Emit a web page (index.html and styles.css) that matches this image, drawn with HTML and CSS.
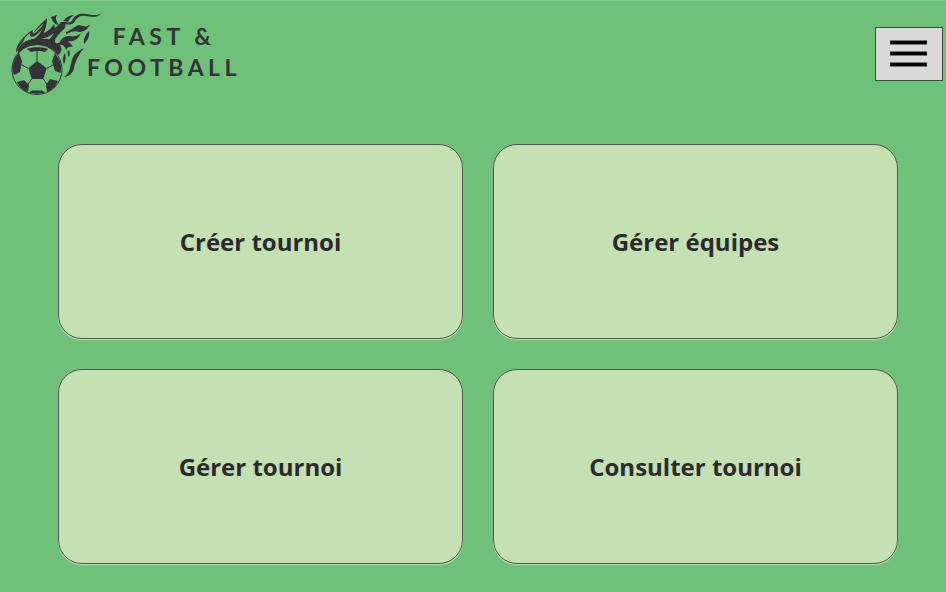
FILE: index.html
```html
<!DOCTYPE html>
<html lang="fr">
<head>
<meta charset="utf-8">
<title>Fast &amp; Football</title>
<link rel="stylesheet" href="styles.css">
</head>
<body>
<header class="topbar">
  <div class="logo">
    <svg class="logo-mark" width="88" height="90" viewBox="0 8 88 90" aria-hidden="true">
      <g fill="#333338">
        <path d="M102 13C98 18 91 17 86 16C81 15 77 17 75 21C73 25 69 25 65 24C67 27 63 30 60 33C57 36 55 40 52 43C50 46 47 45 46 42C49 41 52 36 54 33C51 35 47 38 44 38C40 39 37 42 33 40C37 37 41 33 43 27C45 24 45 21 46 20C46 26 41 31 36 35C32 38 29 37 30 33C27 35 24 38 23 42C21 44 18 47 17 52C15 51 17 46 19 43C21 41 23 37 26 35C28 33 30 31 33 30C32 33 33 34 35 33C39 30 42 26 44 23C39 27 36 31 33 33C36 28 42 23 47 18C47 27 44 31 44 33C50 30 52 27 54 24L55 28C58 26 60 23 61 22L65 22C69 23 72 22 73 19C75 15 80 13 86 14C91 15 98 16 102 13Z"/>
        <path d="M51 17C53 16 55 16 57 15C55 18 56 21 59 25C55 25 52 21 51 17Z"/>
        <path d="M63 21C66 17 70 15 74 15C71 17 69 19 68 22Z"/>
        <path d="M20 46C24 41 32 38 38 39C46 38 51 41 56 38C53 43 57 45 60 42C62 37 66 36 70 36C74 37 78 36 81 33C78 40 73 42 68 41C70 43 72 45 73 47C70 46 67 47 66 50C65 46 62 44 60 45C63 49 61 53 58 55C55 50 47 45 38 45C30 45 23 48 18 54C17 51 18 48 20 46Z"/>
        <path d="M66 32C71 30 75 26 79 25C84 26 87 28 90 24C88 30 83 32 79 32C74 30 70 33 66 34Z"/>
        <path d="M89 31C90 35 88 40 84 44C83 39 86 34 89 31Z"/>
        <path d="M84 48C80 50 76 52 73 57C71 61 71 65 70 68C69 72 67 75 64 77C69 77 73 73 74 68C75 62 79 54 84 48Z"/>
        <path d="M65 53C63 56 62 60 64 64C66 60 66 56 65 53Z"/>
        <path d="M69 50C67 52 67 54 69 57C70 54 70 52 69 50Z"/>
        <path d="M48 49C43 46.500 32 46.500 27 49L31 52C35 50.500 41 50.500 45 52Z"/>
        <path d="M37 61L46.700 68.300L43.300 79L31.700 79L28.300 68.300Z"/>
        <path d="M19 53C15 57 13 62 12.500 67C12.500 70 13 73 14 75L20 72L22 61Z"/>
        <path d="M55 53L60 61C61 65 61.500 69 60.500 73L55 71L52 61Z"/>
        <path d="M17 82C19 86 22 90 28 92L29 85L24 80Z"/>
        <path d="M46 85L47 92C52 90 56 86 58 81L50 79Z"/>
        <path d="M29 92.500C33 94 41 94 45 92.500L42 90.500L32 90.500Z"/>
      </g>
      <g fill="none" stroke="#333338" stroke-width="1">
        <circle cx="37" cy="69.500" r="25"/>
        <path d="M37 51V61M46.700 68.300L55 64M28.300 68.300L20 64M43.300 79L49 87M31.700 79L26 87M28 87H20M46 87H55"/>
      </g>
    </svg>
    <div class="logo-text">
      <span class="logo-line">FAST &amp;</span>
      <span class="logo-line">FOOTBALL</span>
    </div>
  </div>
  <button class="menu-button" type="button" aria-label="Menu">
    <span class="bar"></span>
    <span class="bar"></span>
    <span class="bar"></span>
  </button>
</header>
<main class="cards">
  <a class="card">Créer tournoi</a>
  <a class="card">Gérer équipes</a>
  <a class="card">Gérer tournoi</a>
  <a class="card">Consulter tournoi</a>
</main>
</body>
</html>
```

FILE: styles.css
```css
* { box-sizing: border-box; }
html, body { height: 100%; }
body {
  margin: 0;
  height: 592px;
  overflow: hidden;
  background: #6fc17a;
  border-top: 1px solid #86cc90;
  font-family: "Open Sans", "Noto Sans", sans-serif;
  color: #2b2b2b;
}
.topbar {
  display: flex;
  justify-content: space-between;
  align-items: flex-start;
  height: 143px;
  padding: 26px 3px 0 0;
}
.logo {
  display: flex;
  margin-top: -19px;
  align-items: flex-start;
}
.logo-mark { overflow: visible; flex: none; display: block; }
.logo-text {
  display: flex;
  flex-direction: column;
  align-items: center;
  width: 152px;
  margin-top: 13px;
  font-family: "Lato", sans-serif;
  font-weight: 700;
  font-size: 23px;
  line-height: 31px;
  letter-spacing: 4.5px;
  color: #333338;
}
.logo-line { display: block; white-space: nowrap; }
.menu-button {
  width: 68px;
  height: 54px;
  padding: 12px 15px 13px 14px;
  display: flex;
  flex-direction: column;
  justify-content: space-between;
  background: #d9d9d9;
  border: 1px solid #3f4a44;
  border-radius: 0;
}
.bar {
  display: block;
  height: 5px;
  width: 37px;
  background: #000;
  border-top: 1px solid #777;
  border-bottom: 1px solid #777;
}
.cards {
  display: grid;
  grid-template-columns: 405px 405px;
  grid-auto-rows: 195px;
  gap: 30px;
  padding-left: 58px;
}
.card {
  display: flex;
  align-items: center;
  justify-content: center;
  background: #c5e0b3;
  border: 1px solid #505550;
  border-radius: 24px;
  box-shadow: 0 1px 1px #c6e0b4;
  font-size: 24px;
  font-weight: 700;
}
```
